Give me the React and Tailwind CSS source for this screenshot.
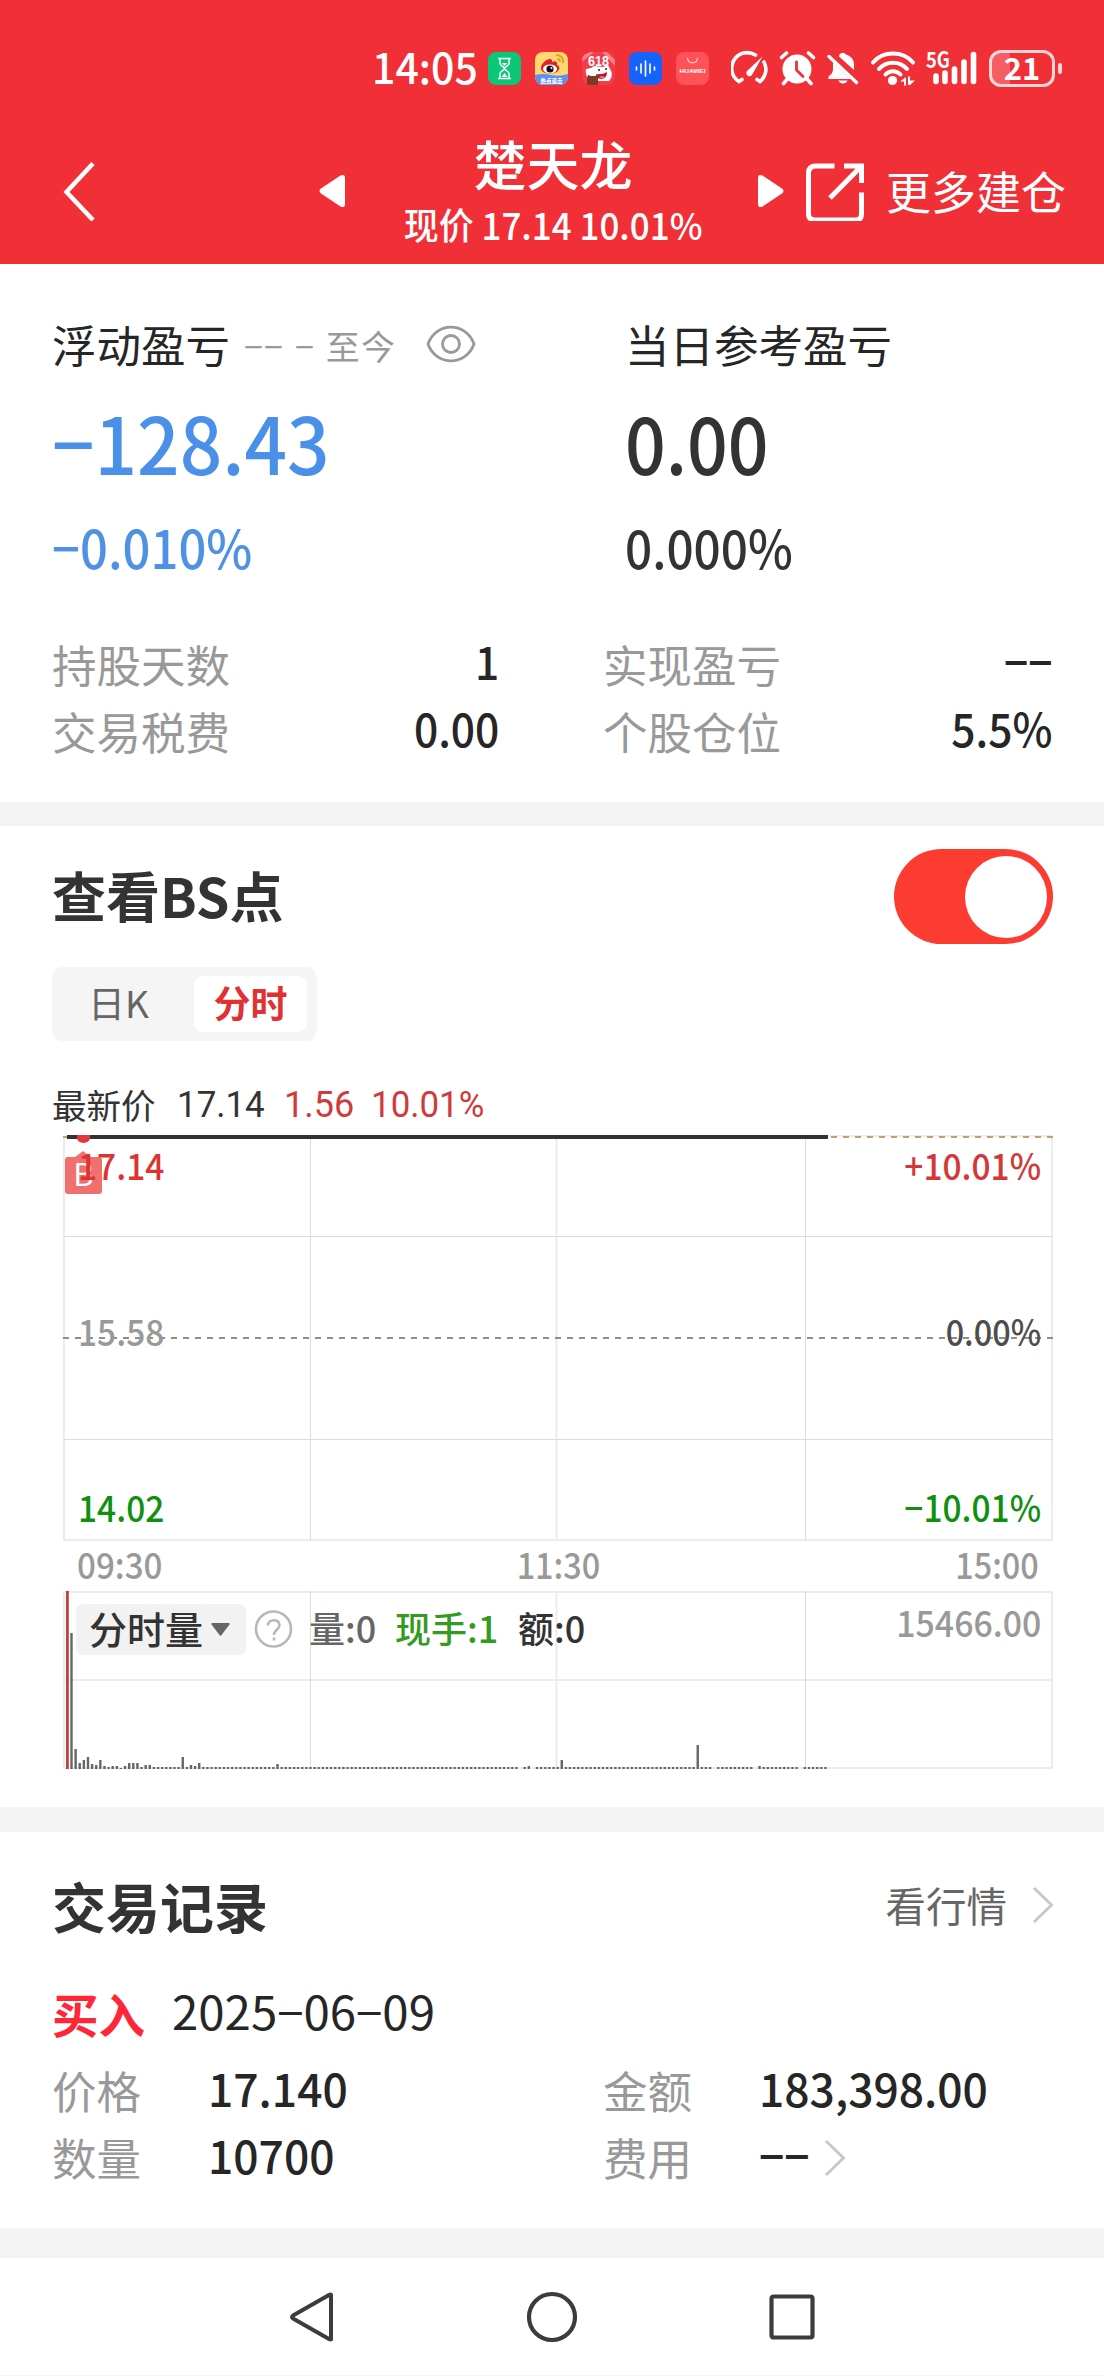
import { useState } from "react";

// 成交量柱: [分鐘序號, 高度]，其餘分鐘高度為 2
const volumePeaks = {
  1: 136, 2: 20, 3: 6, 4: 9, 5: 12, 6: 5, 7: 4, 8: 9, 9: 3, 11: 3, 12: 3, 13: 1, 14: 3,
  15: 6, 16: 6, 17: 6, 19: 4, 20: 4, 28: 12, 30: 4, 31: 3, 32: 6, 51: 5,
  110: 0, 112: 3, 113: 0, 120: 9, 153: 24, 157: 0, 167: 0, 168: 3, 178: 0
};

const volumeBars = Array.from({ length: 184 }, (_, i) => volumePeaks[i + 1] ?? 2);

const holdings = [
  { label: "持股天数", value: "1" },
  { label: "实现盈亏", value: "−−" },
  { label: "交易税费", value: "0.00" },
  { label: "个股仓位", value: "5.5%" }
];

function StatusBar() {
  return (
    <div className="flex h-[136px] items-center pl-[372px] text-white">
      <span className="w-[116px] whitespace-nowrap text-[43px] font-medium leading-[50px]">
        <span className="inline-block origin-left scale-x-[0.955] -translate-y-[3px]">14:05</span>
      </span>
      <div className="flex gap-[14px]">
        <svg className="size-[33px]" viewBox="0 0 33 33" fill="none">
          <rect width="33" height="33" rx="8" fill="#0bc777" />
          <path d="M10 6.500h13M10 26.500h13M12 7v4.500c0 2 4.500 3.500 4.500 5s-4.500 3-4.500 5V26M21 7v4.500c0 2-4.500 3.500-4.500 5s4.500 3 4.500 5V26" stroke="#fff" strokeWidth="1.500" />
          <path d="M14 11h5l-2.500 3zM13.500 25l3-4 3 4z" fill="#fff" />
        </svg>
        <svg className="size-[33px]" viewBox="0 0 33 33">
          <defs>
            <clipPath id="weiboClip"><rect width="33" height="33" rx="8" /></clipPath>
          </defs>
          <g clipPath="url(#weiboClip)">
            <rect width="33" height="33" fill="#ffd96f" />
            <path d="M0 23q8-2 16 0t17-1v11H0z" fill="#5b8ff2" />
            <path d="M6 16c0-5 6-9 9-9 2 0 2 1 2 3 3-2 6 0 5 3 3 1 3 4 1 6-4 4-17 4-17-3z" fill="#e0202c" />
            <ellipse cx="15" cy="17" rx="7" ry="4.500" fill="#fff" />
            <circle cx="15" cy="17" r="3.600" fill="#111" />
            <circle cx="16.500" cy="16" r="1" fill="#fff" />
            <path d="M21 3c5 0 8 3 7 8M22 7c2 0 3 1 3 3" stroke="#ee9a2e" strokeWidth="2" fill="none" />
            <text x="16.500" y="30.500" fontSize="5.500" fontWeight="900" textAnchor="middle" fill="#fff">热点追击</text>
          </g>
        </svg>
        <svg className="size-[33px]" viewBox="0 0 33 33">
          <defs>
            <clipPath id="saleClip"><rect width="33" height="33" rx="8" /></clipPath>
          </defs>
          <g clipPath="url(#saleClip)">
            <rect width="33" height="33" fill="#f23c4b" />
            <path d="M0 4l8-4h4L0 10zM25 0l8 8v6L20 0z" fill="#ff7e83" />
            <path d="M4 17l5-1 3-2 9 1 5-2 2 4c3 4 2 9-1 12H8c-3-3-5-8-4-12z" fill="#fff" />
            <path d="M14 22q6 1 11-2 0 7-6 7-4 0-5-5z" fill="#b81727" />
            <path d="M17 25q3-2 6 0-3 3-6 0z" fill="#ff6d75" />
            <circle cx="17" cy="18" r="1" fill="#222" />
            <circle cx="24" cy="17" r="1" fill="#222" />
            <path d="M5 33v-7l1-3 3 1h4l3-1v10z" fill="#7b3b24" />
            <text x="16.500" y="14" fontSize="14" fontWeight="700" textAnchor="middle" fill="#fff" className="font-['Liberation_Sans',sans-serif]" textLength="21" lengthAdjust="spacingAndGlyphs">618</text>
          </g>
        </svg>
        <svg className="size-[33px]" viewBox="0 0 33 33">
          <rect width="33" height="33" rx="8" fill="#1663fb" />
          <path d="M7.500 15v3M12 12v9M16.500 9v15M21 12v9M25.500 15v3" stroke="#fff" strokeWidth="1.600" strokeLinecap="round" />
        </svg>
        <svg className="size-[33px]" viewBox="0 0 33 33">
          <rect width="33" height="33" rx="8" fill="#ff5258" />
          <path d="M11.500 6c.5 6.500 9.500 6.500 10 0" stroke="#ffd4d4" strokeWidth="1.200" fill="none" />
          <text x="16.500" y="21" fontSize="6.200" fontWeight="700" textAnchor="middle" fill="#fff" className="font-['Liberation_Sans',sans-serif]" textLength="26" lengthAdjust="spacingAndGlyphs">HUAWEI</text>
        </svg>
      </div>
      <div className="ml-[22px] flex items-center text-white">
        <svg className="mr-[11px] h-[36px] w-[37px]" viewBox="0 0 37 36" fill="none" stroke="currentColor" strokeWidth="3.600" strokeLinecap="round">
          <path d="M24.500 5A15.500 15.500 0 0 0 8 31.500M8 31.500l3-2M33 12a15.500 15.500 0 0 1-4 19.500M29 31.500l-3-2" />
          <path d="M31.500 6.500L21.500 24a3.200 3.200 0 1 1-5-3.500z" fill="currentColor" stroke="none" />
        </svg>
        <svg className="mr-[11px] h-[36px] w-[37px]" viewBox="0 0 37 36" fill="none" stroke="currentColor" strokeWidth="3.600" strokeLinecap="round">
          <circle cx="18" cy="19" r="14.500" fill="currentColor" stroke="none" />
          <path d="M2.500 7.500l5-4.500M34.500 7.500l-5-4.500M8 29.500l-3.500 4M28.500 29.500l3.500 4" />
          <path d="M17.500 12v8l6.500 6.500" stroke="#f12f37" strokeWidth="2.800" strokeLinejoin="round" />
        </svg>
        <svg className="mr-[11px] h-[36px] w-[32px]" viewBox="0 0 32 36" fill="currentColor">
          <path d="M12.500 4.500A4 4 0 0 1 19 4.500c5 1.500 8 5 8 10v5.500L12 6.500z" />
          <path d="M6 12.500L23.500 29H1.500v-2.500c3-2.500 4.500-4 4.500-7.500z" />
          <path d="M11.500 30.500h9c-1 4-8 4-9 0z" />
          <path d="M2 6.500L29.500 32.500" stroke="currentColor" strokeWidth="3.400" strokeLinecap="round" />
        </svg>
        <svg className="mr-[10px] h-[36px] w-[46px]" viewBox="0 0 46 36" fill="none" stroke="currentColor" strokeWidth="4" strokeLinecap="round">
          <path d="M3 12.500C13 .5 33 .5 43 12.500M9 19c7-8.500 21-8.500 28 0M15.500 24.500c4-4.500 11-4.500 15 0" />
          <circle cx="22.500" cy="30.500" r="4.600" fill="currentColor" stroke="none" />
          <path d="M30 31.500l6-4.500v8.500h-2v-4zM38 26.500h2v4h5l-5 4.500h-2z" fill="currentColor" stroke="none" />
        </svg>
        <svg className="mr-[11px] h-[36px] w-[52px] overflow-visible" viewBox="0 0 52 36">
          <text x="0" y="18" fontSize="22" fontWeight="600" fill="#fff" textLength="24" lengthAdjust="spacingAndGlyphs">5G</text>
          <path d="M10 26v5.500M19 23v8.500M28.500 19v12.500M38 12v19.500M47.500 4.500v27" stroke="currentColor" strokeWidth="5.600" strokeLinecap="round" />
        </svg>
        <div className="flex h-[37px] w-[66px] items-center justify-center rounded-[12px] border-[3px] border-[#fcd5d7] bg-[linear-gradient(90deg,#f65e65_18px,transparent_18px)]">
          <span className="-translate-y-[2px] text-[31px] font-bold leading-[31px]">21</span>
        </div>
        <div className="ml-[3px] h-[11px] w-[4px] rounded-full bg-[#fcd5d7]" />
      </div>
    </div>
  );
}

function Header() {
  return (
    <header className="h-[264px] bg-[#f12f37] text-white">
      <StatusBar />
      <div className="flex h-[110px] items-center pl-[62px]">
        <svg className="h-[60px] w-[36px]" viewBox="0 0 36 60" fill="none" stroke="currentColor" strokeWidth="4.500">
          <path d="M31 2.500L4.500 31 31 59" />
        </svg>
        <svg className="ml-[221px] h-[34px] w-[27px]" viewBox="0 0 27 34" fill="currentColor">
          <path d="M2 14.500Q-1 17 2 19.500L21.500 32.500Q26 34.500 26 30V4Q26-.5 21.500 1.500z" />
        </svg>
        <div className="ml-[57px] flex w-[300px] flex-col items-center whitespace-nowrap">
          <h1 className="text-[53px] font-medium leading-[62px]">楚天龙</h1>
          <p className="text-[37px] font-medium leading-[56px]">
            <span className="inline-block scale-x-[0.945] translate-y-[2px]">现价 17.14 10.01%</span>
          </p>
        </div>
        <svg className="ml-[54px] h-[34px] w-[27px]" viewBox="0 0 27 34" fill="currentColor">
          <path d="M25 14.500Q28 17 25 19.500L5.500 32.500Q1 34.500 1 30V4Q1-.5 5.500 1.500z" />
        </svg>
        <svg className="ml-[21px] h-[60px] w-[60px]" viewBox="0 0 60 60" fill="none" stroke="currentColor" strokeWidth="5">
          <path d="M29.500 5H11Q3.500 5 3.500 12v41q0 6 7 6h40q6 0 6-6V31.500" />
          <path d="M39 5h17.500v17M56 5.500L25 37" />
        </svg>
        <span className="ml-[21px] whitespace-nowrap text-[45px] leading-[60px]">更多建仓</span>
      </div>
    </header>
  );
}

function Summary() {
  return (
    <section className="bg-white px-[52px] pb-[38px] pt-[50px]">
      <div className="flex">
        <div className="w-[573px]">
          <div className="flex h-[60px] items-center whitespace-nowrap">
            <h2 className="text-[44.500px] text-[#262626]">浮动盈亏</h2>
            <span className="ml-[14px] text-[34px] tracking-[1.200px] text-[#999] [word-spacing:2px] translate-y-px">−− − 至今</span>
            <svg className="ml-[30px] h-[38px] w-[50px]" viewBox="0 0 50 38" fill="none" stroke="#999" strokeWidth="2.800">
              <path d="M2 19C10-3.500 40-3.500 48 19 40 41.500 10 41.500 2 19z" />
              <circle cx="25" cy="19" r="8.500" />
            </svg>
          </div>
          <div className="mt-[17px] h-[100px] text-[79px] font-medium leading-[100px] text-[#4a90e8]">
            <span className="inline-block origin-left scale-x-[0.945]">−128.43</span>
          </div>
          <div className="mt-6 h-[60px] text-[53px] font-medium leading-[60px] text-[#4f91e2]">
            <span className="inline-block origin-left scale-x-[0.925] translate-y-px">−0.010%</span>
          </div>
        </div>
        <div>
          <h2 className="h-[60px] text-[44.500px] leading-[60px] text-[#262626]">当日参考盈亏</h2>
          <div className="mt-[17px] h-[100px] text-[79px] font-medium leading-[100px] text-[#333]">
            <span className="inline-block origin-left scale-x-[0.905]">0.00</span>
          </div>
          <div className="mt-6 h-[60px] text-[53px] font-medium leading-[60px] text-[#333]">
            <span className="inline-block origin-left scale-x-[0.9] translate-y-px">0.000%</span>
          </div>
        </div>
      </div>
      <div className="mt-[55px] grid grid-cols-[447px_449px] gap-x-[104px]">
        {holdings.map((item) => (
          <div key={item.label} className="flex h-[67px] items-center justify-between">
            <span className="translate-y-px text-[44.500px] text-[#999]">{item.label}</span>
            <span className="origin-right scale-x-[0.925] -translate-y-[3px] text-[46px] font-medium text-[#262626]">{item.value}</span>
          </div>
        ))}
      </div>
    </section>
  );
}

function PriceChart() {
  return (
    <div className="relative h-[412px]">
      <svg className="absolute inset-0 h-full w-full" viewBox="0 0 992 412" fill="none">
        <path d="M3 8v404M495.500 8v404M991 8v404M2 411h990M767 7h225" stroke="#ececec" strokeWidth="2" />
        <path d="M249.500 8v404M744.500 8v404M2 107.500h990M2 310.500h990" stroke="#dcdcdc" strokeWidth="1" />
        <path d="M2 209h990" stroke="#8e8e8e" strokeWidth="2" strokeDasharray="6 6" />
        <path d="M2 8h4M770 8h222" stroke="#c0a26c" strokeWidth="2" strokeDasharray="6 6" />
        <path d="M6 8h761" stroke="#333" strokeWidth="4" />
        <path d="M16 6h13v3a6.500 5 0 0 1-13 0z" fill="#dc3a3a" />
        <path d="M14 28l8-6 8 6z" fill="#f07070" />
        <rect x="4" y="28" width="37" height="37" rx="3" fill="#f07070" />
        <text x="22.500" y="57" fontSize="31" textAnchor="middle" fill="#fff">B</text>
      </svg>
      <div className="relative flex h-full justify-between pb-[10px] pl-[17px] pr-[12px] pt-[10px] text-[36px] font-medium leading-[50px]">
        <div className="flex flex-col justify-between">
          <span className="origin-left scale-x-[0.93] text-[#dc3333]">17.14</span>
          <span className="origin-left scale-x-[0.93] -translate-y-[5px] text-[#999]">15.58</span>
          <span className="origin-left scale-x-[0.93] text-[#109010]">14.02</span>
        </div>
        <div className="flex flex-col justify-between text-right">
          <span className="origin-right scale-x-[0.93] text-[#d33838]">+10.01%</span>
          <span className="origin-right scale-x-[0.9] -translate-y-[5px] text-[#4d4d4d]">0.00%</span>
          <span className="origin-right scale-x-[0.93] text-[#109010]">−10.01%</span>
        </div>
      </div>
    </div>
  );
}

function VolumeChart() {
  return (
    <div className="relative h-[178px]">
      <svg className="absolute inset-0 h-full w-full" viewBox="0 0 992 178" fill="none">
        <path d="M3 0v178M495.500 0v178M991 0v178M2 1h990M2 89h990M2 177h990" stroke="#ececec" strokeWidth="2" />
        <path d="M249.500 0v178M744.500 0v178" stroke="#dcdcdc" strokeWidth="1" />
        {volumeBars.map((h, i) => (
          <rect key={i} x={9.300 + i * 4.120} y={178 - h} width="2.400" height={h} fill="#666" />
        ))}
        <rect x="5" y="0" width="2.800" height="178" fill="#c53e3e" />
      </svg>
      <div className="relative flex items-start whitespace-nowrap pl-[15px] pr-[12px] pt-[13px] text-[36px] font-medium">
        <button className="flex h-[51px] w-[170px] items-center rounded-[6px] bg-[#f2f2f2] pl-[13px] text-[38px] text-[#333]">
          <span className="-translate-y-[2px]">分时量</span>
          <svg className="ml-[8px] h-[13px] w-[19px]" viewBox="0 0 19 13">
            <path d="M1 0h17q1 0 .5 1.500L10.500 12q-1 1.500-2 0L.5 1.500Q0 0 1 0z" fill="#666" />
          </svg>
        </button>
        <svg className="ml-[8px] mt-[5px] size-[40px]" viewBox="0 0 40 40" fill="none" stroke="#b8b8b8" strokeWidth="2.600">
          <circle cx="19.500" cy="20" r="17.500" />
          <path d="M14 16.500c0-7 11.500-7 11.500-.5 0 4.500-5.500 4.500-5.500 10M20 28.500v3" />
        </svg>
        <div className="ml-[15px] flex w-[360px] -translate-y-[2px] leading-[50px]">
          <span className="w-[86px] text-[#666]">量:0</span>
          <span className="w-[123px] text-[#349a22]">现手:1</span>
          <span className="text-[#333]">额:0</span>
        </div>
        <span className="ml-auto origin-right scale-x-[0.94] -translate-y-[8px] leading-[50px] text-[#999]">15466.00</span>
      </div>
    </div>
  );
}

function BsPoints() {
  const [enabled, setEnabled] = useState(true);
  const [tab, setTab] = useState("分时");

  return (
    <section className="bg-white pb-[38px] pt-[23px]">
      <div className="flex h-[95px] items-center justify-between pl-[52px] pr-[51px]">
        <h2 className="-translate-y-[2px] text-[54px] font-bold text-[#333]">查看BS点</h2>
        <button
          onClick={() => setEnabled(!enabled)}
          className={`flex h-[95px] w-[159px] items-center rounded-full px-[6px] ${enabled ? "justify-end bg-[#fc3c31]" : "justify-start bg-[#ddd]"}`}
        >
          <span className="size-[82px] rounded-full bg-white" />
        </button>
      </div>
      <div className="ml-[52px] mt-[23px] flex h-[74px] w-[265px] items-center rounded-[11px] bg-[#f5f5f5] pl-[13px]">
        {["日K", "分时"].map((name) => (
          <button
            key={name}
            onClick={() => setTab(name)}
            className={`flex h-[56px] items-center justify-center rounded-[9px] text-[37px] ${name === tab ? "ml-[20px] w-[113px] bg-white font-bold text-[#df3233]" : "w-[107px] text-[#666] mr-[2px]"}`}
          >
            <span className="-translate-y-px">{name}</span>
          </button>
        ))}
      </div>
      <div className="mt-[40px] flex h-[48px] items-center pl-[52px] text-[34.500px] text-[#333]">
        <span className="w-[125px]">最新价</span>
        <span className="w-[107px] origin-left scale-x-[0.97] font-['Roboto','Noto_Sans_CJK_SC',sans-serif] text-[36px]">17.14</span>
        <span className="w-[87px] font-['Roboto','Noto_Sans_CJK_SC',sans-serif] text-[36px] text-[#cf3a3a]">1.56</span>
        <span className="origin-left scale-x-[0.97] font-['Roboto','Noto_Sans_CJK_SC',sans-serif] text-[36px] text-[#cf3a3a]">10.01%</span>
      </div>
      <div className="ml-[61px] w-[992px]">
        <PriceChart />
        <div className="flex h-[50px] justify-between pl-[16px] pr-[14px] text-[36px] font-medium leading-[45px] text-[#999]">
          <span className="origin-left scale-x-[0.92]">09:30</span>
          <span className="scale-x-[0.9]">11:30</span>
          <span className="origin-right scale-x-[0.9]">15:00</span>
        </div>
        <VolumeChart />
      </div>
    </section>
  );
}

function Chevron() {
  return (
    <svg className="h-[38px] w-[22px]" viewBox="0 0 22 38" fill="none" stroke="#c8c8c8" strokeWidth="3">
      <path d="M2 2l17.500 17L2 36" />
    </svg>
  );
}

function TradeRecords() {
  const label = "w-[156px] text-[44.500px] text-[#999]";
  const value = "origin-left scale-x-[0.965] -translate-y-[3px] text-[46px] font-medium text-[#262626]";

  return (
    <section className="bg-white pb-[37px] pl-[52px] pr-[50px] pt-[43px]">
      <div className="flex h-[60px] items-center">
        <h2 className="text-[54px] font-bold text-[#333]">交易记录</h2>
        <span className="ml-auto mr-[25px] text-[40.500px] text-[#666]">看行情</span>
        <Chevron />
      </div>
      <div className="mt-[48px] flex h-[60px] items-center">
        <span className="text-[46.500px] font-bold text-[#ff2638]">买入</span>
        <span className="ml-[27px] origin-left scale-x-[1.03] -translate-y-[3px] whitespace-nowrap text-[46px] text-[#262626]">2025−06−09</span>
      </div>
      <div className="mt-[14px] grid grid-cols-[551px_1fr]">
        <div className="flex h-[67px] items-center">
          <span className={label}>价格</span>
          <span className={value}>17.140</span>
        </div>
        <div className="flex h-[67px] items-center">
          <span className={label}>金额</span>
          <span className={value}>183,398.00</span>
        </div>
        <div className="flex h-[67px] items-center">
          <span className={label}>数量</span>
          <span className={value}>10700</span>
        </div>
        <div className="flex h-[67px] items-center">
          <span className={label}>费用</span>
          <span className={value}>−−</span>
          <span className="ml-[13px]"><Chevron /></span>
        </div>
      </div>
    </section>
  );
}

function NavBar() {
  return (
    <nav className="flex h-[117px] items-center bg-white pl-[288px]">
      <svg className="h-[52px] w-[46px]" viewBox="0 0 46 52" fill="none" stroke="#3c3c3c" strokeWidth="4" strokeLinejoin="round">
        <path d="M43 4v44Q43 49 41 48L5 27.500Q3 26 5 24.500L41 4Q43 3 43 4z" />
      </svg>
      <svg className="ml-[192px] size-[52px]" viewBox="0 0 52 52" fill="none" stroke="#3c3c3c" strokeWidth="4.200">
        <circle cx="26" cy="26" r="23" />
      </svg>
      <svg className="ml-[190px] size-[48px]" viewBox="0 0 48 48" fill="none" stroke="#3c3c3c" strokeWidth="4.200">
        <rect x="3.500" y="3.500" width="41" height="41" rx="2" />
      </svg>
    </nav>
  );
}

export default function App() {
  return (
    <div className="flex h-[2376px] w-[1104px] flex-col overflow-hidden bg-[#f4f4f4] font-['Noto_Sans_CJK_SC',sans-serif]">
      <Header />
      <Summary />
      <div className="h-[24px]" />
      <BsPoints />
      <div className="h-[25px]" />
      <TradeRecords />
      <div className="h-[30px]" />
      <NavBar />
    </div>
  );
}
